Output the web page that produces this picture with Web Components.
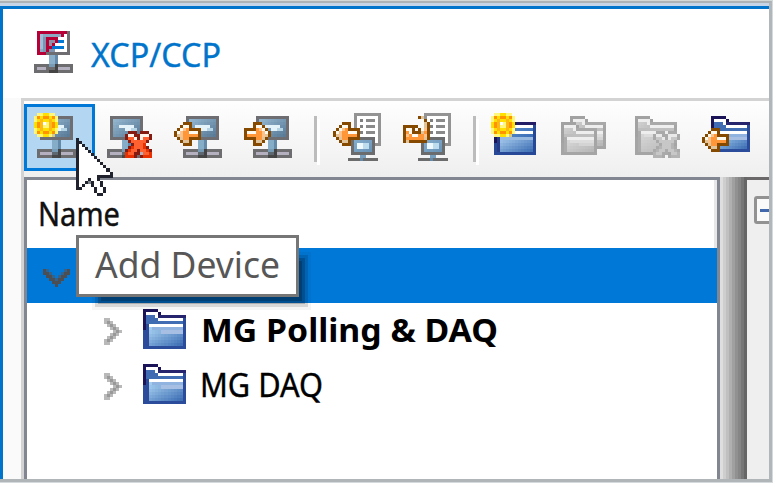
<!DOCTYPE html>
<html lang="en"><head><meta charset="utf-8"><title>XCP/CCP</title>
<style>html,body{margin:0;background:#fff}body{width:776px;height:487px;overflow:hidden}</style></head>
<body><xcp-window></xcp-window>
<script>
const r=(x,y,w,h,c)=>`<rect x="${x}" y="${y}" width="${w}" height="${h}" fill="${c}"/>`;
// Converts a character map to unit cells using a palette.
const bm=(x,y,rows,pal)=>rows.map((s,j)=>[...s].map((c,i)=>pal[c]?r(x+i,y+j,1,1,pal[c]):'').join('')).join('');
const mix=(a,b,t)=>'rgb('+a.map((v,i)=>Math.round(v+(b[i]-v)*t)).join(',')+')';
const grad=(x,y,w,h,a,b)=>{let s='';for(let j=0;j<h;j++)for(let i=0;i<w;i++)s+=r(x+i,y+j,1,1,mix(a,b,(i/w+j/h)/2));return s};
const device=o=>r(o+4,1,11,8,'#6e6e72')+grad(o+5,2,9,6,[145,180,205],[82,115,145])+r(o+7,4,5,1,'#e4f3fa')+r(o+9,5,2,1,'#e4f3fa')+r(o+11,5,2,1,'#b4d3e5')+
 r(o+8,9,2,3,'#86adc8')+r(o+10,9,1,3,'#648aaa')+r(o+3,12,13,3,'#6d6d70')+r(o+4,13,4,1,'#b4b0c0')+r(o+11,13,4,1,'#b4b0c0')+r(o+8,12,2,1,'#779bb4')+r(o+10,12,1,3,'#444')+r(o+8,13,2,1,'#5e6871')+r(o+8,14,2,1,'#484848');
const arrowRows=['...bbb...','..bwwb...','.bwpobbbb','bwpoowwwb','btpooooob','.btoobbbb','..bttb...','...bbb...'];
const ap={b:'#854900',w:'#fffaf0',p:'#ffc28a',o:'#ff9738',t:'#dfc49c'};
const left=(x,y)=>bm(x,y,arrowRows,ap);
const right=(x,y)=>bm(x,y,arrowRows.map(s=>[...s].reverse().join('')),ap);
const sun=bm(0,0,['.yyYYyy.','yoYooYoy','yYfYYfYy','YofwyfoY','YofyyfoY','yYfYYfYy','yoYooYoy','.yyYYyp.'],{y:'#fff67c',Y:'#ffe000',o:'#ff9300',w:'#fff',f:'#ffb914',p:'#d5ca83'});
const crossRows=['.ddd.ddd.','dwwddwwwd','doowdwood','.doooood.','..dooor..','.drooord.','droodoord','roodd.oor','rrrd.drrr'];
const cross=(x,y,g)=>bm(x,y,crossRows,g?{d:'#aaa',w:'#e9e9e9',o:'#c7c7c7',r:'#b4b4b4'}:{d:'#861b12',w:'#fff4ec',o:'#ff6030',r:'#e93000'});
const folder=(x,y,w,h,g)=>{
 const d=g?'#a2a2a2':'#1b1458',hi=g?'#eee':'#fff';
 return r(x,y,5,2,d)+r(x+1,y+1,4,1,hi)+r(x+5,y+1,1,1,d)+r(x,y+2,w,h-2,g?'#a5a5a5':'#2b4c9b')+r(x,y+2,1,5,d)+r(x+5,y+2,w-5,1,g?'#a9a9a9':'#26246c')+
 grad(x+1,y+2,4,3,g?[205,205,205]:[66,108,180],g?[185,185,185]:[60,105,172])+grad(x+1,y+4,w-2,2,g?[190,190,190]:[64,108,178],g?[194,194,194]:[65,112,180])+
 r(x+4,y+2,1,1,hi)+r(x+5,y+3,w-6,1,hi)+r(x+1,y+5,1,h-6,g?'#acacac':'#2c4a98')+r(x+2,y+5,w-3,1,hi)+grad(x+2,y+6,w-3,h-7,g?[213,213,213]:[163,205,238],g?[178,178,178]:[49,99,173])+r(x+3,y+6,w-4,1,g?'#ddd':'#91b3df')+r(x+6,y+7,w-7,1,g?'#d4d4d4':'#a8bfe4')};
const doc=r(7,0,9,11,'#939393')+r(8,1,7,9,'#fff')+[2,4,6].map(y=>r(9,y,1,1,'#808080')+r(11,y,3,1,'#8a8a8a')).join('')+r(6,8,8,6,'#6a6c6e')+grad(7,9,6,4,[130,170,202],[100,143,180])+r(8,10,4,2,'#bddced')+r(8,10,2,2,'#edf8ff')+r(9,14,2,1,'#779ebc')+r(5,15,10,1,'#6c6c6c')+r(9,15,1,1,'#648baa');
const icons={
 add:[16,16,device(-2)+sun],
 remove:[16,16,device(-2)+cross(7,6)],
 import:[16,16,device(0)+left(0,3)],
 export:[16,16,device(0)+right(0,3)],
 docin:[16,16,doc+left(0,3)],
 docback:[16,16,doc+bm(0,1,['.....bt..','......wb.','......wtb','bbbbb.wtb','bwwb.bwpb','bowbbbtob','bpowwoopb','booooootb','btbbbbbb.'],ap)],
 newfolder:[16,16,r(1,3,14,11,'#264896')+r(1,3,14,1,'#221d64')+r(1,4,1,6,'#1b1458')+grad(2,4,12,9,[92,142,208],[46,96,170])+r(8,4,6,1,'#fff')+r(8,6,6,1,'#fff')+r(2,7,1,6,'#263a88')+grad(3,8,11,5,[163,200,235],[49,99,173])+r(3,8,11,1,'#9ab9e1')+sun],
 folders:[16,16,folder(3,1,12,11,1)+folder(0,3,12,11,1)],
 delfolder:[16,16,folder(1,1,14,13,1)+cross(7,6,1)],
 infolder:[16,16,folder(3,1,13,12)+left(0,5)],
 folder:[14,13,folder(0,0,14,13)],
 logo:[13,14,r(1,0,11,8,'#6e6e72')+r(2,1,9,6,'#fff')+r(1,0,10,1,'#b70036')+r(1,0,1,8,'#b70036')+r(2,1,8,1,'#8daac5')+r(2,1,1,6,'#9fbfd8')+r(3,2,5,5,'#7d95b3')+r(4,2,4,1,'#b70036')+r(4,2,1,5,'#b70036')+r(1,7,3,1,'#b70036')+r(2,6,1,1,'#8daac5')+r(5,3,2,3,'#8d91aa')+r(7,3,1,1,'#b70036')+r(6,4,1,1,'#b70036')+r(5,5,1,1,'#b70036')+r(8,3,2,1,'#0078d4')+r(6,5,4,1,'#0078d4')+r(7,4,3,1,'#fff')+r(7,6,4,1,'#fff')+r(9,1,1,1,'#b70036')+r(5,8,2,3,'#8aafc9')+r(7,8,1,3,'#648aaa')+r(0,11,13,3,'#6d6d70')+r(1,12,3,1,'#b4b0c0')+r(8,12,4,1,'#b4b0c0')+r(5,11,2,1,'#779bb4')+r(7,11,1,3,'#444')+r(5,13,2,1,'#444')],
 closed:[6,9,bm(0,0,['bb....','bab...','.bab..','..bab.','...bab','..bab.','.bab..','bab...','bb....'],{a:'#999',b:'#b9b9b9'})],
 open:[9,6,bm(0,0,['ab.....ba','aab...baa','.aab.baa.','..aabaa..','...aaa...','....a....'],{a:'#4b4e52',b:'#34628b'})],
 cursor:[12,19,bm(0,0,['b','bb','bwb','bwwb','bwwwb','bwwwwb','bwwwwwb','bwwwwwwb','bwwwwwwwb','bwwwwwwwwb','bwwwwwwwwwb','bwwwwwwwwwwb','bwwwwwwbbbbb','bwwwbwwb','bwwbgbwwb','bwb..bwwb','bb....bwwb','......bwwb','.......bb'],{b:'#20232d',w:'#fff',g:'#80838a'})]
};
class PixelIcon extends HTMLElement{connectedCallback(){
 const [w,h,s]=icons[this.getAttribute('name')],u=+this.getAttribute('unit')||3.03;
 this.attachShadow({mode:'open'}).innerHTML=`<style>:host{display:block;flex:none;width:${w*u}px;height:${h*u}px}svg{display:block}</style><svg width="${w*u}" height="${h*u}" viewBox="0 0 ${w} ${h}" shape-rendering="crispEdges">${s}</svg>`}}
customElements.define('pixel-icon',PixelIcon);
// A single-line label fitted to a fixed advance width.
class FitLabel extends HTMLElement{connectedCallback(){
 const w=+this.getAttribute('w'),s=this.getAttribute('size')||33;
 this.attachShadow({mode:'open'}).innerHTML=`<style>:host{display:block;flex:none;width:${w}px;height:44px}svg{display:block;overflow:visible}text{font-family:"Noto Sans","Open Sans",sans-serif;font-size:${s}px;fill:currentColor;stroke:currentColor;stroke-width:var(--weight,.4px)}</style><svg width="${w}" height="44"><text x="0" y="34" textLength="${w}" lengthAdjust="spacingAndGlyphs"></text></svg>`;
 this.shadowRoot.querySelector('text').textContent=this.getAttribute('text')}}
customElements.define('fit-label',FitLabel);
class ToolButton extends HTMLElement{connectedCallback(){
 this.attachShadow({mode:'open'}).innerHTML=`<style>:host{display:block;box-sizing:border-box;flex:none;width:70px;height:67px;padding:9px 0 0 10px}:host([active]){width:71px;margin-right:-1px;padding:6px 0 0 7px;border:3px solid #0078d7;background:#b3d6f2}</style><pixel-icon name="${this.getAttribute('icon')}"></pixel-icon>`}}
customElements.define('tool-button',ToolButton);
class ToolSeparator extends HTMLElement{connectedCallback(){
 this.attachShadow({mode:'open'}).innerHTML=`<style>:host{display:block;flex:none;width:3px;height:46px;background:#bcbcbc;box-shadow:3px 3px #fff}</style>`}}
customElements.define('tool-separator',ToolSeparator);
class TreeItem extends HTMLElement{connectedCallback(){
 this.attachShadow({mode:'open'}).innerHTML=`<style>:host{display:flex;box-sizing:border-box;height:55px;padding:6px 0 0 77px}.f{margin:0 14px 0 21px}.c{margin-top:9px}:host([bold]){font-weight:700;--weight:0px}:host([bold]) .f{margin-right:15px}</style><pixel-icon class="c" name="closed" unit="3.05"></pixel-icon><pixel-icon class="f" name="folder" unit="3.07"></pixel-icon><slot></slot>`}}
customElements.define('tree-item',TreeItem);
class ToolTip extends HTMLElement{connectedCallback(){
 this.attachShadow({mode:'open'}).innerHTML=`<style>:host{display:block;box-sizing:border-box;width:223px;height:62px;padding:6px 0 0 16px;border:3px solid #767676;background:#fff;color:#575757;--weight:0px;box-shadow:14px 15px 0 -2px rgba(0,0,0,.04),14px 15px 0 -5px rgba(0,0,0,.12),14px 15px 0 -8px rgba(0,0,0,.2),14px 15px 0 -11px rgba(0,0,0,.2)}</style><slot></slot>`}}
customElements.define('tool-tip',ToolTip);
class XcpWindow extends HTMLElement{connectedCallback(){
 this.attachShadow({mode:'open'}).innerHTML=`<style>
:host{display:block;position:relative;box-sizing:border-box;width:773px;height:483px;border-top:1px solid #d1d8d5;border-right:1px solid #d5dadd;border-bottom:1px solid #d5dadd;background:#fff;overflow:hidden;font-family:"Noto Sans",sans-serif}
.frame{box-sizing:border-box;width:772px;height:481px;border-top:2px solid #abb3b5;border-right:3px solid #b1b6ba;border-bottom:3px solid #b0b5b8}
.in{box-sizing:border-box;height:476px;border-top:3px solid #c5d5e8}
.app{box-sizing:border-box;height:473px;border-left:3px solid #0074ca;border-top:3px solid #0074ca;display:flex;flex-direction:column}
header{display:flex;height:89px;box-sizing:border-box;padding:22px 0 0 31px;color:#0074ca;background:#fff}
header fit-label{margin:2px 0 0 18px}
.body{display:flex;flex:1;background:#fafafa;padding-left:18px;min-height:0}
.panel{box-sizing:border-box;flex:1;min-width:0;border-left:3px solid #d3d3d3;border-top:3px solid #d3d3d3;display:flex;flex-direction:column}
.bar{height:76px;flex:none;display:flex;align-items:flex-start;padding-top:3px;box-sizing:border-box;background:linear-gradient(#fefefe,#efefef)}
tool-separator{margin-top:12px}
.split{display:flex;flex:1;min-height:0}
.tree{box-sizing:border-box;width:696px;flex:none;border:3px solid #818691;border-bottom:0;background:#fff}
.head{height:68px;box-sizing:border-box;padding:12px 0 0 11px;color:#111;border-right:3px solid #e7e7e7}
.sel{height:55px;background:#0078d7;box-sizing:border-box;padding:21px 0 0 16px}
tree-item{color:#000}
tree-item fit-label{margin-top:-1px}
.grip{width:27px;flex:none;background:linear-gradient(90deg,#dedede 0 3px,#cecece 3px 6px,#c0c0c0 6px 9px,#b0b0b0 9px 12px,#a0a0a0 12px 15px,#919191 15px 18px,#868686 18px 21px,#777 21px 24px,#666 24px)}
.side{flex:1;background:#efefef;border-top:3px solid #6b6869;overflow:hidden;padding:16px 0 0 7px}
.box{width:24px;height:22px;border:3px solid #929292;border-radius:3px;background:#fafafa;display:flex;align-items:center}
.box i{width:18px;height:3px;margin-left:3px;background:#4268ac}
tool-tip{position:absolute;left:76px;top:234px;z-index:1}
.cursor{position:absolute;left:76px;top:137px;z-index:2}
</style>
<div class="frame"><div class="in"><div class="app">
<header><pixel-icon name="logo"></pixel-icon><fit-label text="XCP/CCP" w="130"></fit-label></header>
<div class="body"><div class="panel">
<div class="bar"><tool-button active icon="add"></tool-button><tool-button icon="remove"></tool-button><tool-button icon="import"></tool-button><tool-button icon="export"></tool-button><tool-separator style="margin-left:10px;margin-right:6px"></tool-separator><tool-button icon="docin"></tool-button><tool-button icon="docback"></tool-button><tool-separator style="margin-left:10px;margin-right:5px"></tool-separator><tool-button icon="newfolder"></tool-button><tool-button icon="folders"></tool-button><tool-button icon="delfolder" style="width:71px;padding-left:11px"></tool-button><tool-button icon="infolder" style="width:60px"></tool-button></div>
<div class="split"><div class="tree"><div class="head"><fit-label text="Name" w="82"></fit-label></div><div class="sel"><pixel-icon name="open"></pixel-icon></div>
<tree-item bold><fit-label text="MG Polling &amp; DAQ" w="297"></fit-label></tree-item><tree-item><fit-label text="MG DAQ" w="123"></fit-label></tree-item></div>
<div class="grip"></div><div class="side"><div class="box"><i></i></div></div></div>
</div></div></div></div></div>
<tool-tip><fit-label text="Add Device" w="185" size="37"></fit-label></tool-tip><pixel-icon class="cursor" name="cursor" unit="3.05"></pixel-icon>`}}
customElements.define('xcp-window',XcpWindow);
</script></body></html>
